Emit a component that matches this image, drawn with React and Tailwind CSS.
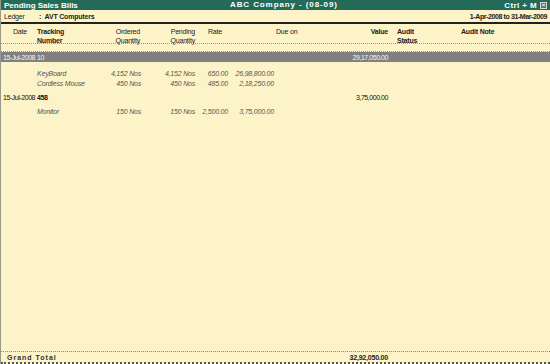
import React from "react";

const font = { fontFamily: '"Liberation Sans", Arial, sans-serif' };

const W = {
  c1: "w-[35px] shrink-0",
  c2: "w-[65px] shrink-0",
  c3: "w-[40px] shrink-0",
  c4: "w-[54px] shrink-0",
  c5: "w-[33px] shrink-0",
  c6: "w-[46px] shrink-0",
  c7: "w-[114px] shrink-0",
  c8: "w-[64px] shrink-0",
};

function ItemRow({ name, ord, pend, rate, amt }) {
  return (
    <div className="flex h-[10px] shrink-0 items-center italic text-[#555]">
      <div className={W.c1}></div>
      <div className={W.c2 + " pl-[1px] whitespace-nowrap"}>{name}</div>
      <div className={W.c3 + " text-right whitespace-nowrap"}>{ord}</div>
      <div className={W.c4 + " text-right whitespace-nowrap"}>{pend}</div>
      <div className={W.c5 + " text-right whitespace-nowrap"}>{rate}</div>
      <div className={W.c6 + " text-right whitespace-nowrap"}>{amt}</div>
    </div>
  );
}

export default function App() {
  return (
    <div
      className="w-[550px] h-[364px] bg-[#fcf4c8] text-[7px] leading-[9px] text-[#222] flex flex-col border-l border-[#9a9a8a] overflow-hidden tracking-[-0.2px]"
      style={font}
    >
      {/* title bar */}
      <div className="h-[10px] shrink-0 bg-[#236b58] text-white font-bold text-[8px] flex items-center px-[3px] relative tracking-[0px]">
        <div className="flex-1">Pending Sales Bills</div>
        <div className="absolute left-[229px] top-0 leading-[10px] tracking-[0.9px]">ABC Company - (08-09)</div>
        <div className="flex items-center gap-[3px]">
          <span className="tracking-[0.4px]">Ctrl + M</span>
          <span className="w-[7px] h-[7px] border border-[#d8d8d8] bg-[#4a7c70] flex items-center justify-center text-[6px] leading-none">×</span>
        </div>
      </div>
      {/* ledger */}
      <div className="h-[14px] shrink-0 flex items-center px-[3px] border-b-2 border-[#222]">
        <span className="w-[35px]">Ledger</span>
        <span className="font-bold">: &nbsp;AVT Computers</span>
        <span className="ml-auto font-bold tracking-[-0.4px]">1-Apr-2008 to 31-Mar-2009</span>
      </div>
      {/* header */}
      <div className="flex pt-[3px] h-[20px] shrink-0 border-b border-dotted border-[#999]">
        <div className={W.c1 + " text-center pl-[3px]"}>Date</div>
        <div className={W.c2 + " font-bold pl-[1px]"}>
          Tracking<br />Number
        </div>
        <div className={W.c3 + " text-right pr-[1px]"}>
          Ordered<br />Quantity
        </div>
        <div className={W.c4 + " text-right"}>
          Pending<br />Quantity
        </div>
        <div className={W.c5 + " pl-[13px]"}>Rate</div>
        <div className={W.c6}></div>
        <div className={W.c7 + " flex justify-between pl-[2px]"}>
          <span>Due on</span>
          <span className="font-bold">Value</span>
        </div>
        <div className={W.c8 + " pl-[9px] font-bold"}>
          Audit<br />Status
        </div>
        <div className="pl-[9px] font-bold">Audit Note</div>
      </div>
      <div className="h-[8px] shrink-0 border-b border-dotted border-[#999]"></div>
      {/* gray group row */}
      <div className="h-[10px] shrink-0 bg-[#808080] text-[#f4f4f4] flex items-center tracking-[-0.45px]">
        <div className={W.c1 + " pl-[2px] whitespace-nowrap"}>15-Jul-2008</div>
        <div className={W.c2 + " pl-[1px]"}>10</div>
        <div className={W.c3}></div>
        <div className={W.c4}></div>
        <div className={W.c5}></div>
        <div className={W.c6}></div>
        <div className={W.c7 + " text-right"}>29,17,050.00</div>
      </div>
      <div className="h-[6px] shrink-0"></div>
      <ItemRow name="KeyBoard" ord="4,152 Nos" pend="4,152 Nos" rate="650.00" amt="26,98,800.00" />
      <ItemRow name="Cordless Mouse" ord="450 Nos" pend="450 Nos" rate="485.00" amt="2,18,250.00" />
      <div className="h-[4px] shrink-0"></div>
      <div className="flex h-[10px] shrink-0 items-center text-[#111] tracking-[-0.45px]">
        <div className={W.c1 + " pl-[2px] whitespace-nowrap"}>15-Jul-2008</div>
        <div className={W.c2 + " pl-[1px] font-bold"}>458</div>
        <div className={W.c3}></div>
        <div className={W.c4}></div>
        <div className={W.c5}></div>
        <div className={W.c6}></div>
        <div className={W.c7 + " text-right font-medium"}>3,75,000.00</div>
      </div>
      <div className="h-[4px] shrink-0"></div>
      <ItemRow name="Monitor" ord="150 Nos" pend="150 Nos" rate="2,500.00" amt="3,75,000.00" />
      <div className="flex-1"></div>
      {/* grand total */}
      <div className="h-[13px] shrink-0 border-t border-dotted border-[#888] border-b-2 border-b-[#555] flex items-center font-bold">
        <div className="w-[273px] pl-[6px] tracking-[1px] text-[#333]">Grand Total</div>
        <div className={W.c7 + " text-right"}>32,92,050.00</div>
      </div>
    </div>
  );
}
